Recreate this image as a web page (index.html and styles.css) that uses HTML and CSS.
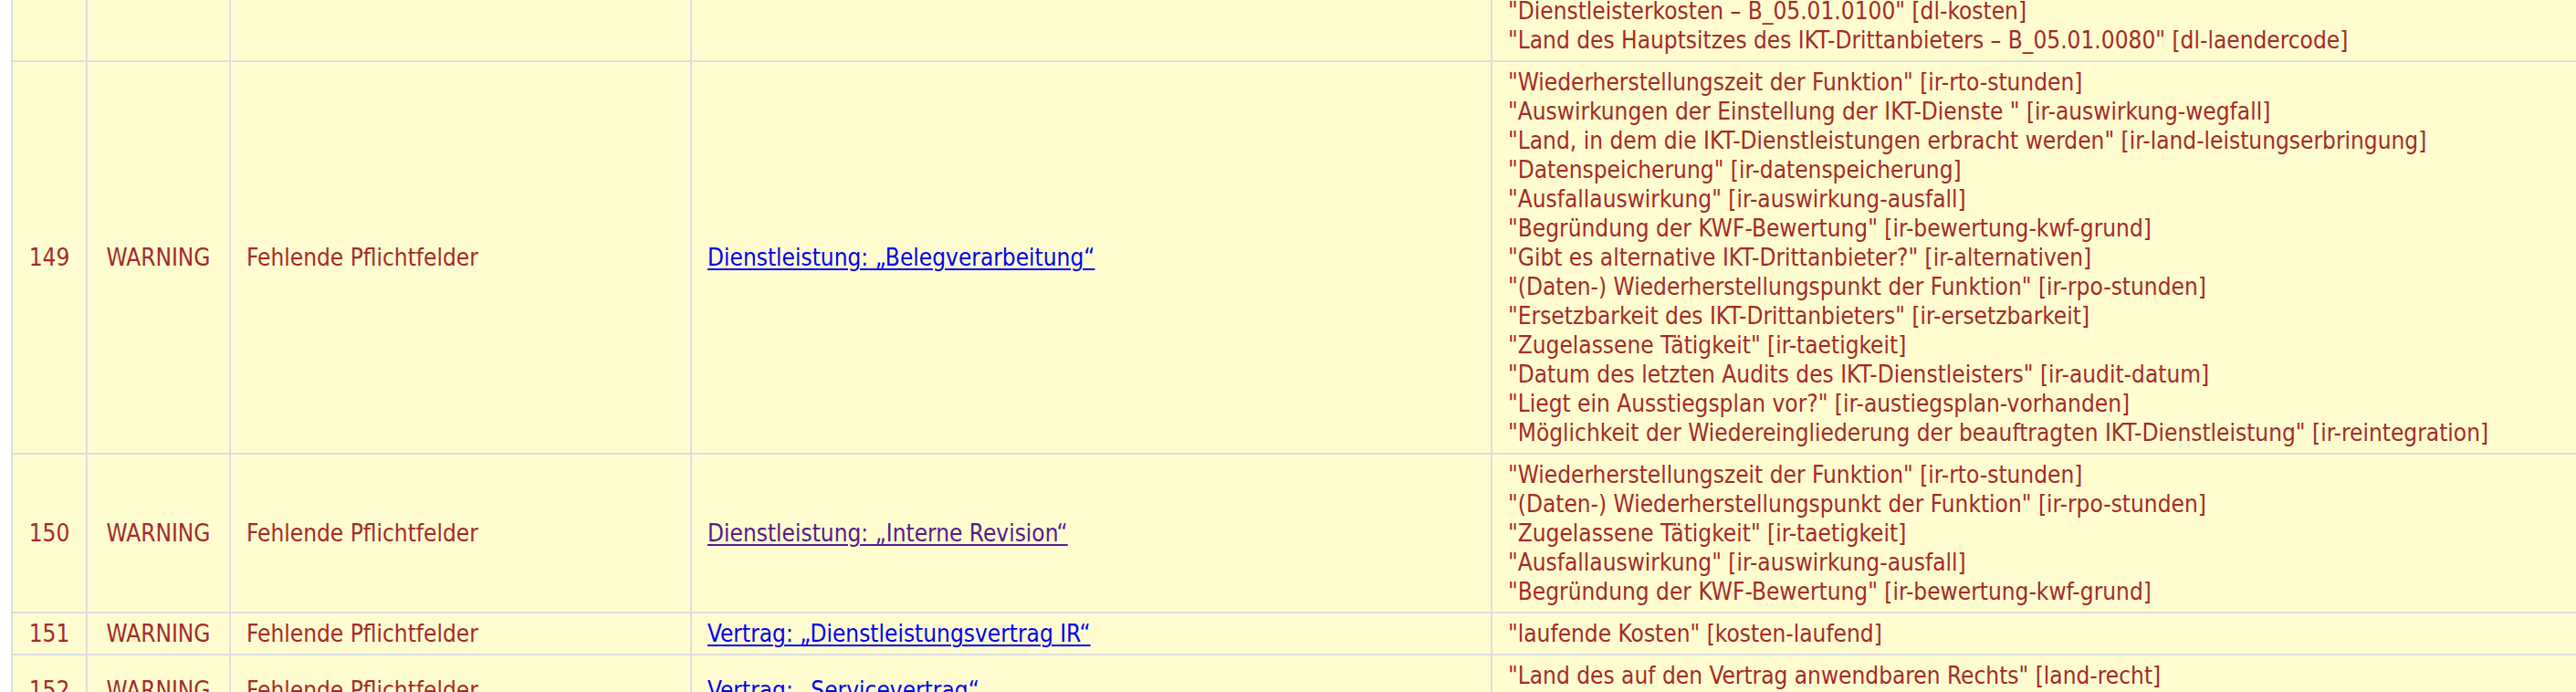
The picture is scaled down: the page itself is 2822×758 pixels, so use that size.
FILE: index.html
```html
<!DOCTYPE html>
<html lang="de">
<head>
    <meta charset="UTF-8">
    <meta name="viewport" content="width=device-width, initial-scale=1.0">
    <title>Validierung – Meldungen</title>
    <link rel="stylesheet" href="styles.css">
</head>
<body>
    <div class="report">
        <table class="issues">
            <colgroup>
                <col class="col-nr">
                <col class="col-level">
                <col class="col-rule">
                <col class="col-object">
                <col class="col-fields">
            </colgroup>
            <tbody>
                <tr>
                    <td class="nr">148</td>
                    <td class="level">WARNING</td>
                    <td>Fehlende Pflichtfelder</td>
                    <td><a href="#dl-148">Dienstleister: „Rechenzentrum Nord GmbH“</a></td>
                    <td class="fields">
                        <div>"Name des IKT-Drittanbieters" [dl-name]</div>
                        <div>"Rechtsträgerkennung (LEI)" [dl-lei]</div>
                        <div>"Art des IKT-Drittanbieters" [dl-typ]</div>
                        <div>"Oberste Muttergesellschaft" [dl-mutter]</div>
                        <div>"Dienstleisterkosten – B_05.01.0100" [dl-kosten]</div>
                        <div>"Land des Hauptsitzes des IKT-Drittanbieters – B_05.01.0080" [dl-laendercode]</div>
                    </td>
                </tr>
                <tr>
                    <td class="nr">149</td>
                    <td class="level">WARNING</td>
                    <td>Fehlende Pflichtfelder</td>
                    <td><a href="#dl-149">Dienstleistung: „Belegverarbeitung“</a></td>
                    <td class="fields">
                        <div>"Wiederherstellungszeit der Funktion" [ir-rto-stunden]</div>
                        <div>"Auswirkungen der Einstellung der IKT-Dienste " [ir-auswirkung-wegfall]</div>
                        <div>"Land, in dem die IKT-Dienstleistungen erbracht werden" [ir-land-leistungserbringung]</div>
                        <div>"Datenspeicherung" [ir-datenspeicherung]</div>
                        <div>"Ausfallauswirkung" [ir-auswirkung-ausfall]</div>
                        <div>"Begründung der KWF-Bewertung" [ir-bewertung-kwf-grund]</div>
                        <div>"Gibt es alternative IKT-Drittanbieter?" [ir-alternativen]</div>
                        <div>"(Daten-) Wiederherstellungspunkt der Funktion" [ir-rpo-stunden]</div>
                        <div>"Ersetzbarkeit des IKT-Drittanbieters" [ir-ersetzbarkeit]</div>
                        <div>"Zugelassene Tätigkeit" [ir-taetigkeit]</div>
                        <div>"Datum des letzten Audits des IKT-Dienstleisters" [ir-audit-datum]</div>
                        <div>"Liegt ein Ausstiegsplan vor?" [ir-austiegsplan-vorhanden]</div>
                        <div>"Möglichkeit der Wiedereingliederung der beauftragten IKT-Dienstleistung" [ir-reintegration]</div>
                    </td>
                </tr>
                <tr>
                    <td class="nr">150</td>
                    <td class="level">WARNING</td>
                    <td>Fehlende Pflichtfelder</td>
                    <td><a class="visited" href="#dl-150">Dienstleistung: „Interne Revision“</a></td>
                    <td class="fields">
                        <div>"Wiederherstellungszeit der Funktion" [ir-rto-stunden]</div>
                        <div>"(Daten-) Wiederherstellungspunkt der Funktion" [ir-rpo-stunden]</div>
                        <div>"Zugelassene Tätigkeit" [ir-taetigkeit]</div>
                        <div>"Ausfallauswirkung" [ir-auswirkung-ausfall]</div>
                        <div>"Begründung der KWF-Bewertung" [ir-bewertung-kwf-grund]</div>
                    </td>
                </tr>
                <tr>
                    <td class="nr">151</td>
                    <td class="level">WARNING</td>
                    <td>Fehlende Pflichtfelder</td>
                    <td><a href="#vt-151">Vertrag: „Dienstleistungsvertrag IR“</a></td>
                    <td class="fields">
                        <div>"laufende Kosten" [kosten-laufend]</div>
                    </td>
                </tr>
                <tr>
                    <td class="nr">152</td>
                    <td class="level">WARNING</td>
                    <td>Fehlende Pflichtfelder</td>
                    <td><a href="#vt-152">Vertrag: „Servicevertrag“</a></td>
                    <td class="fields">
                        <div>"Land des auf den Vertrag anwendbaren Rechts" [land-recht]</div>
                        <div>"Kündigungsfrist" [kuendigungsfrist]</div>
                    </td>
                </tr>
            </tbody>
        </table>
    </div>
</body>
</html>
```
FILE: styles.css
```css
html {
    overflow: hidden;
}

body {
    margin: 0;
    background: #fff;
    font-family: "DejaVu Sans Condensed", "DejaVu Sans", sans-serif;
    font-size: 26px;
    line-height: 32px;
    color: #a52a2a;
}

/* page is scrolled: row 148 starts above the window */
.report {
    padding-left: 12px;
    margin-top: -140px;
}

.issues {
    width: 3000px;
    table-layout: fixed;
    border-collapse: collapse;
    background: #fffdd0;
}

.col-nr { width: 82px; }
.col-level { width: 157px; }
.col-rule { width: 505px; }
.col-object { width: 877px; }

.issues td {
    border: 2px solid #dddde0;
    padding: 6px 17px;
    vertical-align: middle;
    white-space: nowrap;
}

.issues td.nr,
.issues td.level {
    text-align: center;
}

.issues a {
    color: #0000ee;
    text-decoration-thickness: 2px;
    text-underline-offset: 3px;
}

.issues a.visited {
    color: #551a8b;
}
```
